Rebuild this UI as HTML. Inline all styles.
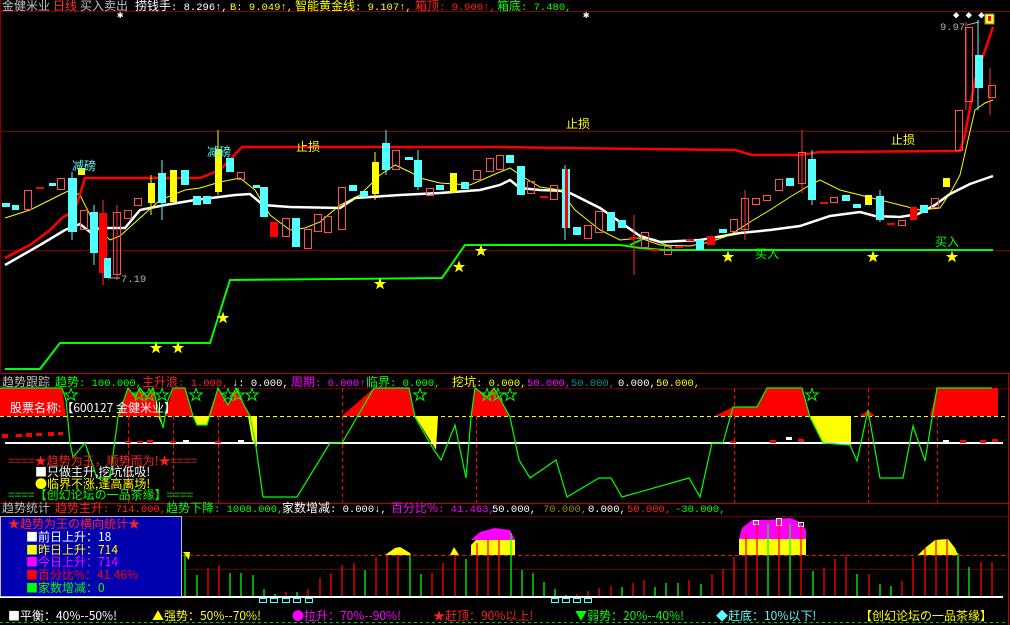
<!DOCTYPE html>
<html><head><meta charset="utf-8"><style>
html,body{margin:0;padding:0;background:#000;width:1010px;height:625px;overflow:hidden}
svg{display:block}
text{font-family:"Liberation Mono","WenQuanYi Zen Hei",monospace;font-size:10.5px}
.c{font-family:"WenQuanYi Zen Hei","Noto Sans CJK SC",sans-serif;font-size:12px}
.cy{fill:#54ffff}.rd{fill:none;stroke:#ff5050;stroke-width:1}.rf{fill:#ff0000}.yf{fill:#ffff00}
</style></head><body>
<svg width="1010" height="625" viewBox="0 0 1010 625" xmlns="http://www.w3.org/2000/svg">
<defs>
<path id="st" d="M0,-6.5 L1.6,-2 L6.2,-2 L2.5,0.8 L3.9,5.3 L0,2.6 L-3.9,5.3 L-2.5,0.8 L-6.2,-2 L-1.6,-2 Z"/>
<clipPath id="up"><rect x="0" y="388" width="1010" height="28"/></clipPath>
</defs>
<rect width="1010" height="625" fill="#000"/>
<g stroke="#800000" stroke-width="1">
<line x1="0" y1="11.5" x2="1010" y2="11.5"/>
<line x1="0" y1="131.5" x2="1010" y2="131.5"/>
<line x1="0" y1="250.5" x2="1010" y2="250.5"/>
<line x1="0.5" y1="0" x2="0.5" y2="372"/>
</g>
<text y="10"><tspan x="2" class="c" fill="#c0c0c0">金健米业</tspan><tspan x="53" class="c" fill="#ff3030">日线</tspan><tspan x="80" class="c" fill="#c0c0c0">买入卖出</tspan><tspan x="135" class="c" fill="#fff">捞钱手</tspan><tspan fill="#fff">: 8.296↑,</tspan><tspan x="230" fill="#ffff00">B: 9.049↑,</tspan><tspan x="295" class="c" fill="#ffff00">智能黄金线</tspan><tspan fill="#ffff00">: 9.107↑,</tspan><tspan x="415" class="c" fill="#ff2020">箱顶</tspan><tspan fill="#ff2020">: 9.900↑,</tspan><tspan x="497" class="c" fill="#00ff00">箱底</tspan><tspan fill="#00ff00">: 7.480,</tspan></text>
<text x="117" y="18" fill="#fff" font-size="11">✱</text>
<text x="583" y="18" fill="#fff" font-size="11">✱</text>
<text x="953" y="18" fill="#fff" font-size="10">◆ ◆ ◆</text>
<rect x="985" y="14" width="9" height="10" fill="#ffff00" stroke="#888"/>
<rect x="988" y="16" width="3" height="5" fill="#ff0000"/>
<text x="940" y="30" fill="#b0b0b0" font-size="11">9.97</text>
<line x1="967" y1="25" x2="979" y2="22" stroke="#aaa"/>

<polyline fill="none" stroke="#00ff00" stroke-width="2" points="5,369 40,369 60,343 210,343 230,280 442,278 465,245 620,245 640,248 665,250 993,250"/>
<polyline fill="none" stroke="#00ff00" stroke-width="2" points="630,245 645,238 655,240 672,248"/>
<polyline fill="none" stroke="#fff" stroke-width="2.5" points="5,265 40,245 65,230 80,224 90,232 100,228 125,228 140,210 165,205 195,200 235,195 250,194 263,205 290,207 340,208 355,198 400,195 440,193 480,190 500,185 510,180 520,188 540,190 566,191 600,208 640,236 660,242 700,240 740,233 770,230 800,226 830,216 860,212 875,216 900,217 918,214 935,205 950,194 970,184 993,176"/>
<polyline fill="none" stroke="#ffff00" stroke-width="1" points="5,218 30,210 60,195 70,190 80,195 95,225 110,240 120,236 140,218 160,200 185,190 200,188 220,182 240,178 255,190 270,215 290,230 305,228 320,222 340,205 360,195 380,175 395,165 410,172 420,178 440,183 470,185 500,172 510,168 520,175 540,187 560,190 575,210 600,230 620,240 640,238 660,245 690,246 710,242 730,235 750,222 770,210 790,197 810,185 820,180 840,190 860,195 880,200 900,205 920,210 940,208 952,190 960,175 968,140 975,110 985,103 993,100"/>
<polyline fill="none" stroke="#ff0000" stroke-width="2.5" points="5,258 30,245 50,230 62,218 75,210 85,178 200,178 220,170 242,147 500,147 560,148 735,150 752,155 800,155 820,152 960,151 965,135 975,80 993,27"/>

<g stroke-width="1">
<g stroke="#54ffff"><line x1="72" y1="172" x2="72" y2="240"/><line x1="94" y1="205" x2="94" y2="265"/><line x1="162" y1="160" x2="162" y2="220"/><line x1="386" y1="130" x2="386" y2="175"/><line x1="418" y1="150" x2="418" y2="190"/><line x1="565" y1="165" x2="565" y2="240"/><line x1="812" y1="150" x2="812" y2="205"/><line x1="978" y1="20" x2="978" y2="110"/><line x1="880" y1="190" x2="880" y2="222"/></g>
<g stroke="#ff3030"><line x1="103" y1="200" x2="103" y2="285"/><line x1="117" y1="205" x2="117" y2="280"/><line x1="802" y1="130" x2="802" y2="193"/><line x1="966" y1="22" x2="966" y2="110"/><line x1="990" y1="68" x2="990" y2="115"/><line x1="634" y1="215" x2="634" y2="275"/><line x1="745" y1="190" x2="745" y2="240"/></g>
<g stroke="#ffff00"><line x1="218" y1="130" x2="218" y2="195"/><line x1="151" y1="175" x2="151" y2="215"/><line x1="375" y1="152" x2="375" y2="200"/></g>
<rect class="cy" x="2" y="203" width="8" height="4"/>
<rect class="cy" x="12" y="205" width="7" height="5"/>
<rect class="rd" x="24.5" y="190.5" width="7" height="19"/>
<rect class="rf" x="36" y="187" width="8" height="2"/>
<rect class="cy" x="49" y="183" width="7" height="3"/>
<rect class="rd" x="57.5" y="178.5" width="7" height="11"/>
<rect class="cy" x="68" y="178" width="9" height="54"/>
<rect class="yf" x="78" y="168" width="7" height="7"/>
<rect class="rd" x="80.5" y="210.5" width="7" height="19"/>
<rect class="cy" x="90" y="212" width="8" height="41"/>
<rect class="rf" x="99" y="213" width="8" height="60"/>
<rect class="cy" x="104" y="258" width="7" height="20"/>
<rect class="rd" x="113.5" y="212.5" width="7" height="62"/>
<rect class="rd" x="124.5" y="210.5" width="7" height="8"/>
<rect class="rd" x="134.5" y="198.5" width="7" height="7"/>
<rect class="yf" x="148" y="183" width="7" height="20"/>
<rect class="cy" x="158" y="173" width="8" height="30"/>
<rect class="yf" x="170" y="170" width="7" height="32"/>
<rect class="cy" x="181" y="170" width="8" height="15"/>
<rect class="cy" x="193" y="196" width="8" height="9"/>
<rect class="cy" x="203" y="196" width="8" height="8"/>
<rect class="yf" x="215" y="149" width="7" height="43"/>
<rect class="cy" x="226" y="158" width="8" height="14"/>
<rect class="rd" x="237.5" y="172.5" width="7" height="7"/>
<rect class="cy" x="253" y="185" width="7" height="3"/>
<rect class="cy" x="260" y="187" width="8" height="30"/>
<rect class="rf" x="270" y="222" width="8" height="15"/>
<rect class="rd" x="282.5" y="218.5" width="7" height="18"/>
<rect class="cy" x="292" y="218" width="8" height="29"/>
<rect class="rd" x="304.5" y="229.5" width="7" height="19"/>
<rect class="rd" x="314.5" y="214.5" width="7" height="17"/>
<rect class="rd" x="324.5" y="216.5" width="7" height="16"/>
<rect class="rd" x="338.5" y="187.5" width="7" height="42"/>
<rect class="cy" x="349" y="185" width="8" height="6"/>
<rect class="cy" x="360" y="191" width="8" height="6"/>
<rect class="yf" x="372" y="162" width="7" height="32"/>
<rect class="cy" x="382" y="143" width="8" height="27"/>
<rect class="rd" x="392.5" y="150.5" width="7" height="19"/>
<rect class="cy" x="405" y="157" width="8" height="3"/>
<rect class="cy" x="414" y="160" width="8" height="27"/>
<rect class="rd" x="426.5" y="188.5" width="7" height="7"/>
<rect class="cy" x="436" y="185" width="8" height="5"/>
<rect class="yf" x="450" y="173" width="7" height="20"/>
<rect class="cy" x="461" y="182" width="8" height="7"/>
<rect class="rd" x="473.5" y="170.5" width="7" height="9"/>
<rect class="rd" x="486.5" y="158.5" width="7" height="13"/>
<rect class="rd" x="496.5" y="155.5" width="7" height="14"/>
<rect class="cy" x="506" y="155" width="8" height="8"/>
<rect class="cy" x="517" y="166" width="8" height="29"/>
<rect class="rd" x="527.5" y="181.5" width="7" height="12"/>
<rect class="rf" x="540" y="196" width="8" height="2"/>
<rect class="rd" x="550.5" y="185.5" width="7" height="14"/>
<rect class="cy" x="562" y="169" width="8" height="59"/>
<rect class="rf" x="565" y="169" width="3" height="59"/>
<rect class="cy" x="573" y="227" width="8" height="8"/>
<rect class="rd" x="584.5" y="225.5" width="7" height="13"/>
<rect class="rd" x="595.5" y="211.5" width="7" height="21"/>
<rect class="cy" x="607" y="212" width="8" height="19"/>
<rect class="cy" x="618" y="220" width="8" height="8"/>
<rect class="rf" x="629" y="237" width="8" height="2"/>
<rect class="rd" x="641.5" y="232.5" width="7" height="15"/>
<rect class="rf" x="651" y="249" width="8" height="2"/>
<rect class="rd" x="664.5" y="246.5" width="7" height="8"/>
<rect class="rf" x="675" y="246" width="8" height="2"/>
<rect class="rf" x="686" y="239" width="8" height="2"/>
<rect class="cy" x="696" y="240" width="8" height="10"/>
<rect class="rf" x="707" y="236" width="8" height="9"/>
<rect class="cy" x="719" y="229" width="8" height="4"/>
<rect class="rd" x="730.5" y="219.5" width="7" height="12"/>
<rect class="rd" x="741.5" y="198.5" width="7" height="31"/>
<rect class="rd" x="752.5" y="198.5" width="7" height="6"/>
<rect class="rd" x="763.5" y="195.5" width="7" height="5"/>
<rect class="rd" x="775.5" y="179.5" width="7" height="11"/>
<rect class="cy" x="786" y="178" width="8" height="8"/>
<rect class="rd" x="798.5" y="152.5" width="7" height="31"/>
<rect class="cy" x="808" y="159" width="8" height="41"/>
<rect class="rf" x="820" y="202" width="8" height="2"/>
<rect class="rd" x="830.5" y="197.5" width="7" height="5"/>
<rect class="cy" x="842" y="195" width="8" height="6"/>
<rect class="cy" x="853" y="204" width="8" height="4"/>
<rect class="yf" x="865" y="195" width="7" height="10"/>
<rect class="cy" x="876" y="196" width="8" height="24"/>
<rect class="rf" x="887" y="223" width="8" height="2"/>
<rect class="rd" x="898.5" y="220.5" width="7" height="5"/>
<rect class="rf" x="910" y="207" width="7" height="13"/>
<rect class="cy" x="920" y="205" width="8" height="8"/>
<rect class="rd" x="931.5" y="198.5" width="7" height="9"/>
<rect class="yf" x="943" y="178" width="7" height="9"/>
<rect class="rd" x="955.5" y="110.5" width="7" height="40"/>
<rect class="rd" x="965.5" y="27.5" width="7" height="74"/>
<rect class="cy" x="975" y="55" width="8" height="33"/>
<rect class="rd" x="988.5" y="85.5" width="7" height="12"/>
</g>
<text x="72" y="170" class="c" fill="#54ffff">减磅</text>
<text x="207" y="156" class="c" fill="#54ffff">减磅</text>
<text x="296" y="151" class="c" fill="#ffff00">止损</text>
<text x="566" y="128" class="c" fill="#ffff00">止损</text>
<text x="891" y="144" class="c" fill="#ffff00">止损</text>
<text x="755" y="258" class="c" fill="#00ff00">买入</text>
<text x="935" y="246" class="c" fill="#00ff00">买入</text>
<text x="121" y="282" fill="#b0b0b0" font-size="11">7.19</text>
<line x1="108" y1="278" x2="120" y2="278" stroke="#aaa"/>
<g fill="#ffff00">
<use href="#st" x="156" y="348"/><use href="#st" x="178" y="348"/><use href="#st" x="223" y="318"/><use href="#st" x="380" y="284"/><use href="#st" x="459" y="267"/><use href="#st" x="481" y="251"/><use href="#st" x="728" y="257"/><use href="#st" x="873" y="257"/><use href="#st" x="952" y="257"/>
</g>

<line x1="0" y1="373.5" x2="1010" y2="373.5" stroke="#c00000"/>
<line x1="0" y1="388.5" x2="1010" y2="388.5" stroke="#600000"/>
<line x1="0" y1="503.5" x2="1010" y2="503.5" stroke="#c00000"/>
<line x1="1008.5" y1="373" x2="1008.5" y2="625" stroke="#c00000"/>
<text y="386"><tspan x="2" class="c" fill="#c0c0c0">趋势跟踪</tspan><tspan x="55" class="c" fill="#00ff00">趋势</tspan><tspan fill="#00ff00">: 100.000,</tspan><tspan x="142" class="c" fill="#ff2020">主升浪</tspan><tspan fill="#ff2020">: 1.000,</tspan><tspan x="232" fill="#fff">↓: 0.000,</tspan><tspan x="291" class="c" fill="#ff00ff">周期</tspan><tspan fill="#ff00ff">: 6.000↑,</tspan><tspan x="366" class="c" fill="#00ff00">临界</tspan><tspan fill="#00ff00">: 0.000,</tspan><tspan x="452" class="c" fill="#ffff00">挖坑</tspan><tspan fill="#ffff00">: 0.000,</tspan><tspan x="527" fill="#ff00ff">50.000,</tspan><tspan x="571" fill="#009090">50.000,</tspan><tspan x="618" fill="#fff">0.000,</tspan><tspan x="656" fill="#ffff00">50.000,</tspan></text>
<polygon clip-path="url(#up)" fill="#ff0000" points="0,416 0,388 62,388 66,416 118,416 128,388 135,397 140,388 147,397 153,388 160,416 165,416 173,388 185,388 193,416 208,416 218,388 228,405 236,388 244,405 250,416 330,416 336,416 342,416 374,388 409,388 415,416 466,416 471,416 475,388 487,397 494,388 510,416 715,416 733,407 757,407 767,388 802,388 810,416 860,416 868,410 875,416 930,416 937,388 992,388 998,388 998,416"/>
<g fill="#ffff00">
<polygon points="153,416 160,416 163,428 158,416"/>
<polygon points="193,416 210,416 207,425 197,425"/>
<polygon points="248,416 257,416 257,447 252,440"/>
<polygon points="415,416 438,416 436,450 430,440"/>
<polygon points="810,416 851,416 851,445 823,443"/>
</g>
<line x1="0" y1="416.5" x2="1005" y2="416.5" stroke="#ffff00" stroke-dasharray="4,3"/>
<line x1="5" y1="443" x2="1003" y2="443" stroke="#fff" stroke-width="2"/>
<g stroke="#ff0000" stroke-dasharray="4,3"><line x1="128.5" y1="388" x2="128.5" y2="503"/><line x1="173.5" y1="388" x2="173.5" y2="503"/><line x1="218.5" y1="388" x2="218.5" y2="503"/><line x1="342.5" y1="388" x2="342.5" y2="503"/><line x1="476.5" y1="388" x2="476.5" y2="503"/><line x1="734.5" y1="388" x2="734.5" y2="503"/><line x1="868.5" y1="388" x2="868.5" y2="503"/><line x1="937.5" y1="388" x2="937.5" y2="503"/></g>
<polyline fill="none" stroke="#00ff00" stroke-width="1.2" points="0,388 62,388 66,400 70,443 73,457 85,443 97,478 110,478 118,417 128,388 135,397 140,388 147,397 153,388 160,416 163,428 168,400 173,388 185,388 193,416 197,425 207,425 218,388 228,405 236,388 244,405 250,416 256,447 263,497 297,497 330,443 342,443 374,388 409,388 415,417 434,450 441,460 455,425 466,478 471,417 475,388 487,397 494,388 510,417 519,460 530,478 556,460 567,497 599,478 611,478 622,497 689,478 700,497 712,443 723,443 733,407 757,407 767,388 802,388 810,417 823,443 850,445 857,461 868,410 880,478 903,478 913,426 925,461 937,388 992,388"/>
<g fill="none" stroke="#00ff00" stroke-width="1">
<use href="#st" x="71" y="395"/><use href="#st" x="139" y="395"/><use href="#st" x="149" y="395"/><use href="#st" x="162" y="395"/><use href="#st" x="196" y="395"/><use href="#st" x="228" y="395"/><use href="#st" x="238" y="395"/><use href="#st" x="252" y="395"/><use href="#st" x="420" y="395"/><use href="#st" x="487" y="395"/><use href="#st" x="498" y="395"/><use href="#st" x="510" y="395"/><use href="#st" x="812" y="395"/>
</g>
<text x="10" y="412" class="c" font-size="12.5" fill="#fff">股票名称:【600127 金健米业】</text>
<g fill="#ff0000"><rect x="2" y="434" width="6" height="4"/><rect x="16" y="434" width="6" height="3"/><rect x="26" y="433" width="6" height="4"/><rect x="36" y="433" width="6" height="3"/><rect x="48" y="432" width="6" height="4"/><rect x="58" y="432" width="5" height="3"/>
<rect x="125" y="441" width="6" height="2"/><rect x="137" y="441" width="6" height="2"/><rect x="147" y="440" width="6" height="3"/><rect x="170" y="441" width="6" height="2"/><rect x="215" y="441" width="6" height="2"/><rect x="730" y="441" width="6" height="2"/><rect x="770" y="440" width="6" height="3"/><rect x="798" y="439" width="6" height="3"/><rect x="960" y="440" width="6" height="3"/><rect x="980" y="440" width="6" height="3"/><rect x="992" y="439" width="6" height="3"/></g>
<g fill="#fff"><rect x="183" y="440" width="6" height="2"/><rect x="238" y="440" width="6" height="2"/><rect x="786" y="437" width="6" height="3"/><rect x="943" y="440" width="6" height="2"/></g>
<text x="8" y="465" class="c" fill="#ff2020" font-size="11">====★趋势为王，顺势而为!★====</text>
<text x="35" y="476" class="c" fill="#fff" font-size="11">■只做主升,挖坑低吸!</text>
<text x="35" y="488" class="c" fill="#ffff00" font-size="11">●临界不涨,逢高离场!</text>
<text x="8" y="499" class="c" fill="#00ff00" font-size="11">====【创幻论坛の一品茶缘】====</text>

<text y="512"><tspan x="2" class="c" fill="#c0c0c0">趋势统计</tspan><tspan x="55" class="c" fill="#ff2020">趋势主升</tspan><tspan fill="#ff2020">: 714.000,</tspan><tspan x="166" class="c" fill="#00ff00">趋势下降</tspan><tspan fill="#00ff00">: 1008.000,</tspan><tspan x="282" class="c" fill="#fff">家数增减</tspan><tspan fill="#fff">: 0.000↓,</tspan><tspan x="391" class="c" fill="#ff00ff">百分比%</tspan><tspan fill="#ff00ff">: 41.463,</tspan><tspan x="492" fill="#fff">50.000,</tspan><tspan x="543" fill="#909000">70.000,</tspan><tspan x="588" fill="#fff">0.000,</tspan><tspan x="627" fill="#ff2020">50.000,</tspan><tspan x="675" fill="#00ff00">-30.000,</tspan></text>
<line x1="0" y1="516.5" x2="1010" y2="516.5" stroke="#600000"/>
<line x1="182" y1="569.5" x2="1005" y2="569.5" stroke="#600000"/>
<line x1="182" y1="555.5" x2="1005" y2="555.5" stroke="#ff0000" stroke-dasharray="4,3"/>
<polygon fill="#ff00ff" points="739,539 742,528 752,520 770,520 790,518 800,522 806,530 806,539"/>
<rect x="739" y="539" width="67" height="16" fill="#ffff00"/>
<polygon fill="#ff00ff" points="471,540 480,532 495,528 510,530 515,540"/>
<polygon fill="#ffff00" points="471,555 471,545 476,540 515,540 515,555"/>
<polygon fill="#ffff00" points="918,555 925,548 935,540 948,539 955,548 958,555"/>
<polygon fill="#ffff00" points="385,555 395,548 400,547 410,553 411,555"/>
<polygon fill="#ffff00" points="450,555 454,547 459,555"/>
<polygon fill="#ffff00" points="183,552 190,552 189,560"/>
<g fill="none" stroke="#fff"><rect x="753.5" y="520.5" width="5" height="4"/><rect x="776.5" y="518.5" width="5" height="7"/><rect x="798.5" y="522.5" width="5" height="4"/></g>
<g stroke-width="1.3">
<g stroke="#00ff00"><line x1="185" y1="553" x2="185" y2="597"/><line x1="197" y1="575" x2="197" y2="597"/><line x1="230" y1="573" x2="230" y2="597"/><line x1="241" y1="573" x2="241" y2="597"/><line x1="253" y1="575" x2="253" y2="597"/><line x1="264" y1="589" x2="264" y2="597"/><line x1="275" y1="594" x2="275" y2="597"/><line x1="297" y1="592" x2="297" y2="597"/><line x1="365" y1="570" x2="365" y2="597"/><line x1="410" y1="555" x2="410" y2="597"/><line x1="421" y1="574" x2="421" y2="597"/><line x1="466" y1="559" x2="466" y2="597"/><line x1="511" y1="533" x2="511" y2="597"/><line x1="522" y1="570" x2="522" y2="597"/><line x1="533" y1="573" x2="533" y2="597"/><line x1="544" y1="582" x2="544" y2="597"/><line x1="555" y1="589" x2="555" y2="597"/><line x1="566" y1="595" x2="566" y2="597"/><line x1="622" y1="587" x2="622" y2="597"/><line x1="655" y1="587" x2="655" y2="597"/><line x1="666" y1="583" x2="666" y2="597"/><line x1="678" y1="583" x2="678" y2="597"/><line x1="701" y1="584" x2="701" y2="597"/><line x1="768" y1="524" x2="768" y2="597"/><line x1="790" y1="524" x2="790" y2="597"/><line x1="813" y1="571" x2="813" y2="597"/><line x1="857" y1="574" x2="857" y2="597"/><line x1="880" y1="584" x2="880" y2="597"/><line x1="891" y1="586" x2="891" y2="597"/><line x1="958" y1="553" x2="958" y2="597"/><line x1="969" y1="567" x2="969" y2="597"/></g>
<g stroke="#ff0000"><line x1="208" y1="568" x2="208" y2="597"/><line x1="219" y1="565" x2="219" y2="597"/><line x1="286" y1="592" x2="286" y2="597"/><line x1="308" y1="589" x2="308" y2="597"/><line x1="320" y1="578" x2="320" y2="597"/><line x1="331" y1="573" x2="331" y2="597"/><line x1="342" y1="565" x2="342" y2="597"/><line x1="354" y1="563" x2="354" y2="597"/><line x1="376" y1="557" x2="376" y2="597"/><line x1="387" y1="555" x2="387" y2="597"/><line x1="398" y1="555" x2="398" y2="597"/><line x1="432" y1="573" x2="432" y2="597"/><line x1="443" y1="563" x2="443" y2="597"/><line x1="455" y1="555" x2="455" y2="597"/><line x1="477" y1="543" x2="477" y2="597"/><line x1="488" y1="540" x2="488" y2="597"/><line x1="499" y1="538" x2="499" y2="597"/><line x1="577" y1="594" x2="577" y2="597"/><line x1="588" y1="591" x2="588" y2="597"/><line x1="599" y1="588" x2="599" y2="597"/><line x1="611" y1="586" x2="611" y2="597"/><line x1="633" y1="583" x2="633" y2="597"/><line x1="644" y1="580" x2="644" y2="597"/><line x1="689" y1="580" x2="689" y2="597"/><line x1="712" y1="574" x2="712" y2="597"/><line x1="723" y1="569" x2="723" y2="597"/><line x1="734" y1="557" x2="734" y2="597"/><line x1="746" y1="532" x2="746" y2="597"/><line x1="757" y1="524" x2="757" y2="597"/><line x1="779" y1="521" x2="779" y2="597"/><line x1="801" y1="526" x2="801" y2="597"/><line x1="824" y1="568" x2="824" y2="597"/><line x1="835" y1="559" x2="835" y2="597"/><line x1="846" y1="555" x2="846" y2="597"/><line x1="869" y1="574" x2="869" y2="597"/><line x1="902" y1="581" x2="902" y2="597"/><line x1="913" y1="558" x2="913" y2="597"/><line x1="925" y1="548" x2="925" y2="597"/><line x1="936" y1="540" x2="936" y2="597"/><line x1="947" y1="539" x2="947" y2="597"/><line x1="981" y1="562" x2="981" y2="597"/><line x1="992" y1="562" x2="992" y2="597"/></g>
</g>
<line x1="0" y1="597" x2="1003" y2="597" stroke="#fff" stroke-width="2"/>
<g fill="none" stroke="#54ffff"><rect x="259.5" y="598.5" width="7" height="4"/><rect x="270.5" y="598.5" width="7" height="4"/><rect x="282.5" y="598.5" width="7" height="4"/><rect x="293.5" y="598.5" width="7" height="4"/><rect x="305.5" y="598.5" width="7" height="4"/><rect x="551.5" y="598.5" width="7" height="4"/><rect x="562.5" y="598.5" width="7" height="4"/><rect x="573.5" y="598.5" width="7" height="4"/><rect x="584.5" y="598.5" width="7" height="4"/></g>
<rect x="0.5" y="516.5" width="181" height="80" fill="#0000b0" stroke="#c0c0c0"/>
<text x="8" y="528" class="c" font-size="12.5" fill="#ff2020">★趋势为王の横向统计★</text>
<text x="26" y="541" class="c" font-size="12.5" fill="#fff">■前日上升：18</text>
<text x="26" y="554" class="c" font-size="12.5" fill="#ffff00">■昨日上升：714</text>
<text x="26" y="566" class="c" font-size="12.5" fill="#ff00ff">■今日上升：714</text>
<text x="26" y="579" class="c" font-size="12.5" fill="#ff0000">■百分比%：41.46%</text>
<text x="26" y="592" class="c" font-size="12.5" fill="#00ff00">■家数增减：0</text>
<text y="620" class="c" font-size="12"><tspan x="8" fill="#fff">■平衡：40%--50%!</tspan><tspan x="152" fill="#ffff00">▲强势：50%--70%!</tspan><tspan x="292" fill="#ff00ff">●拉升：70%--90%!</tspan><tspan x="433" fill="#ff2020">★赶顶：90%以上!</tspan><tspan x="575" fill="#00ff00">▼弱势：20%--40%!</tspan><tspan x="716" fill="#54ffff">◆赶底：10%以下!</tspan><tspan x="860" fill="#ffff00">【创幻论坛の一品茶缘】</tspan></text>
<line x1="0" y1="622.5" x2="1005" y2="622.5" stroke="#00c000" stroke-dasharray="3,3"/>
</svg>
</body></html>
